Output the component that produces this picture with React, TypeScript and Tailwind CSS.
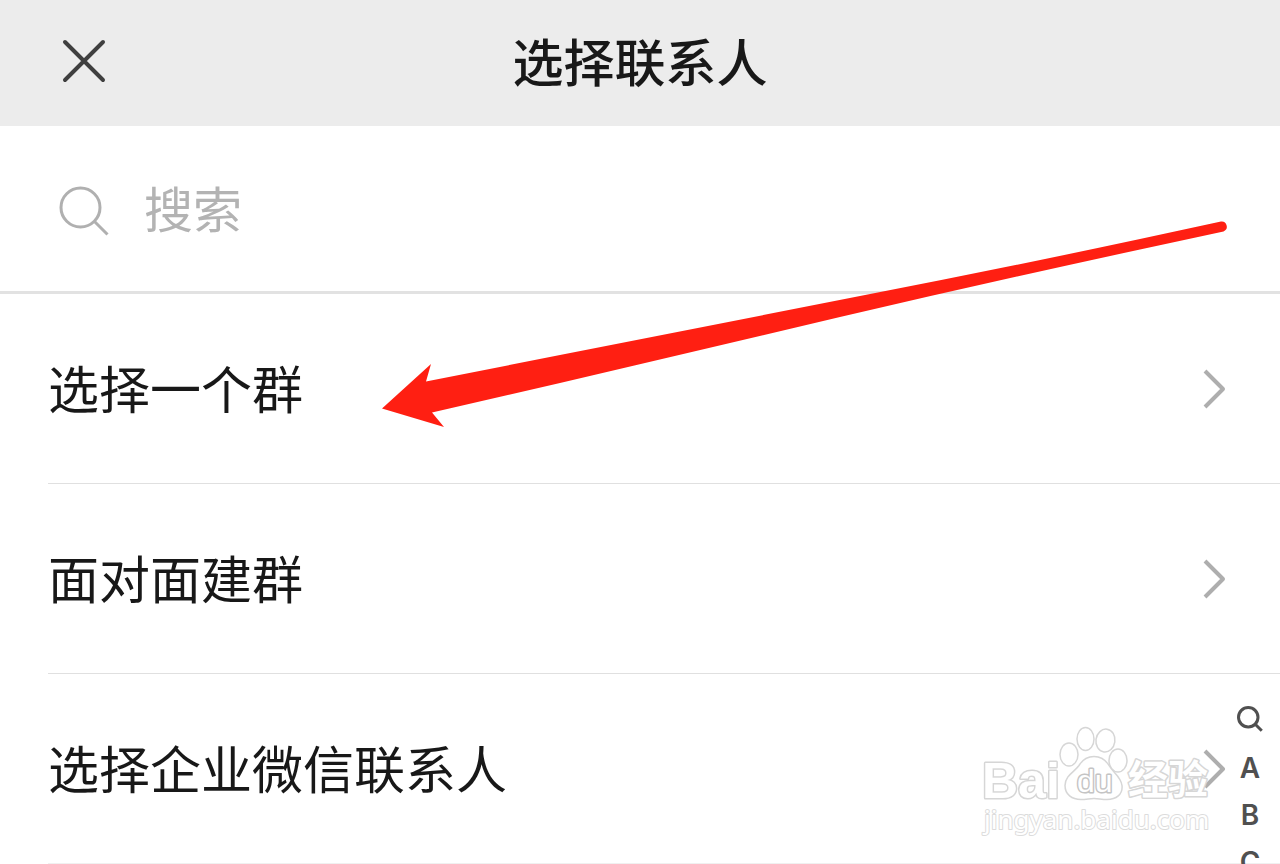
import React, { useState } from 'react';
import { clsx } from 'clsx';

interface Entry {
  id: string;
  label: string;
}

const entries: Entry[] = [
  { id: 'group', label: '选择一个群' },
  { id: 'face-to-face', label: '面对面建群' },
  { id: 'work', label: '选择企业微信联系人' },
];

const indexLetters = ['A', 'B', 'C'];

const CloseIcon: React.FC = () => (
  <svg className="h-12 w-12" viewBox="0 0 48 48" fill="none" stroke="#3f3f3f" strokeWidth="4" strokeLinecap="round">
    <path d="M5 5 43 43M43 5 5 43" />
  </svg>
);

interface SearchIconProps {
  className?: string;
  strokeWidth: number;
}

const SearchIcon: React.FC<SearchIconProps> = ({ className, strokeWidth }) => (
  <svg className={className} viewBox="0 0 52 52" fill="none" stroke="currentColor" strokeWidth={strokeWidth}>
    <circle cx="22.500" cy="22.500" r="19.500" />
    <path d="M36 36 49.500 49.500" />
  </svg>
);

const ChevronIcon: React.FC = () => (
  <svg className="h-10 w-6" viewBox="0 0 24 40" fill="none" stroke="#aeaeae" strokeWidth="4" strokeLinejoin="round">
    <path d="M2 2 20 20 2 38" />
  </svg>
);

const PointerArrow: React.FC = () => (
  <svg className="pointer-events-none absolute left-[380px] top-[216px] h-[216px] w-[852px]" viewBox="380 216 852 216">
    <path
      d="M382 408.500 431 364 426 381.500 560 355 860 296Q1000 269 1140 239L1221 221.500A5.200 5.200 0 0 1 1223.500 231.500L1140 249.500Q990 282 840 317L560 383 432 412.500 444 427Z"
      fill="#ff1f12"
    />
  </svg>
);

const Watermark: React.FC = () => (
  <svg
    className="pointer-events-none absolute left-[976px] top-[720px] h-[124px] w-[240px] overflow-visible"
    viewBox="976 720 240 124"
    fill="#ffffff"
    stroke="#d6d6d6"
    strokeWidth="1.500"
    strokeLinejoin="round"
  >
    <ellipse cx="1069" cy="754.500" rx="9" ry="11.500" />
    <ellipse cx="1085.500" cy="739" rx="8.500" ry="11.500" />
    <ellipse cx="1105.500" cy="740.500" rx="9.500" ry="11.500" transform="rotate(8 1105 740)" />
    <ellipse cx="1118" cy="760.500" rx="9" ry="11.500" />
    <path d="M1094 756.500c-7 0-12 4-15 9-4 6-14 10-14 20 0 9 7 14 16 14 5 0 9-1 13-1s8 1 13 1c9 0 16-5 15-14-1-9-9-13-13-20-3-5-8-9-15-9Z" />
    <g paintOrder="stroke">
      <text x="982" y="798" fontSize="50" fontWeight="700" strokeWidth="3" fontFamily="'Liberation Sans', sans-serif">Bai</text>
      <text x="1077" y="792" fontSize="32" strokeWidth="3" stroke="#c4c4c4" fontFamily="'Liberation Sans', sans-serif">du</text>
      <text x="1128" y="794" fontSize="40" fontWeight="700" strokeWidth="3" fontFamily="'Noto Sans CJK SC', sans-serif">经验</text>
      <text x="984" y="829" fontSize="26" strokeWidth="2" stroke="#dcdcdc" fontFamily="'Noto Sans', sans-serif">jingyan.baidu.com</text>
    </g>
  </svg>
);

export default function App() {
  const [query, setQuery] = useState('');

  return (
    <div className="relative h-screen overflow-hidden bg-white font-['Liberation_Sans','Noto_Sans_CJK_SC',sans-serif] text-[51px] leading-[76px] text-[#181818]">
      {/* Header */}
      <header className="grid h-[126px] grid-cols-[1fr_auto_1fr] items-center bg-[#ececec] px-[60px]">
        <button type="button" aria-label="关闭" className="justify-self-start pb-1">
          <CloseIcon />
        </button>
        <h1 className="pt-1 font-medium">选择联系人</h1>
      </header>

      {/* Search */}
      <label className="flex h-[168px] items-center gap-[34px] border-b-[3px] border-[#e2e2e2] px-[58px] pt-1 text-[#b0b0b0]">
        <SearchIcon className="h-[52px] w-[52px] shrink-0" strokeWidth={3} />
        <input
          type="text"
          aria-label="搜索"
          placeholder="搜索"
          value={query}
          onChange={(e) => setQuery(e.target.value)}
          className="min-w-0 flex-1 bg-transparent text-[49px] outline-none placeholder:text-[#b3b3b3]"
        />
      </label>

      {/* Entries */}
      <ul className="pl-12">
        {entries.map((entry, i) => (
          <li key={entry.id} className={clsx('border-b', i < entries.length - 1 ? 'border-[#e0e0e0]' : 'border-[#f0f0f0]')}>
            <button type="button" className="flex h-[189px] w-full items-center justify-between pr-[53px] text-left">
              <span className="pt-1.5">{entry.label}</span>
              <ChevronIcon />
            </button>
          </li>
        ))}
      </ul>

      <Watermark />

      {/* Letter index */}
      <nav className="absolute right-4 top-[697px] flex w-7 flex-col items-center font-['Inter',sans-serif] text-[28px] font-semibold leading-[47px] text-[#505050]">
        <button type="button" aria-label="搜索" className="flex h-12 items-center pb-1">
          <SearchIcon className="h-[26px] w-[26px]" strokeWidth={6} />
        </button>
        {indexLetters.map((letter) => (
          <button type="button" key={letter}>{letter}</button>
        ))}
      </nav>

      <PointerArrow />
    </div>
  );
}
